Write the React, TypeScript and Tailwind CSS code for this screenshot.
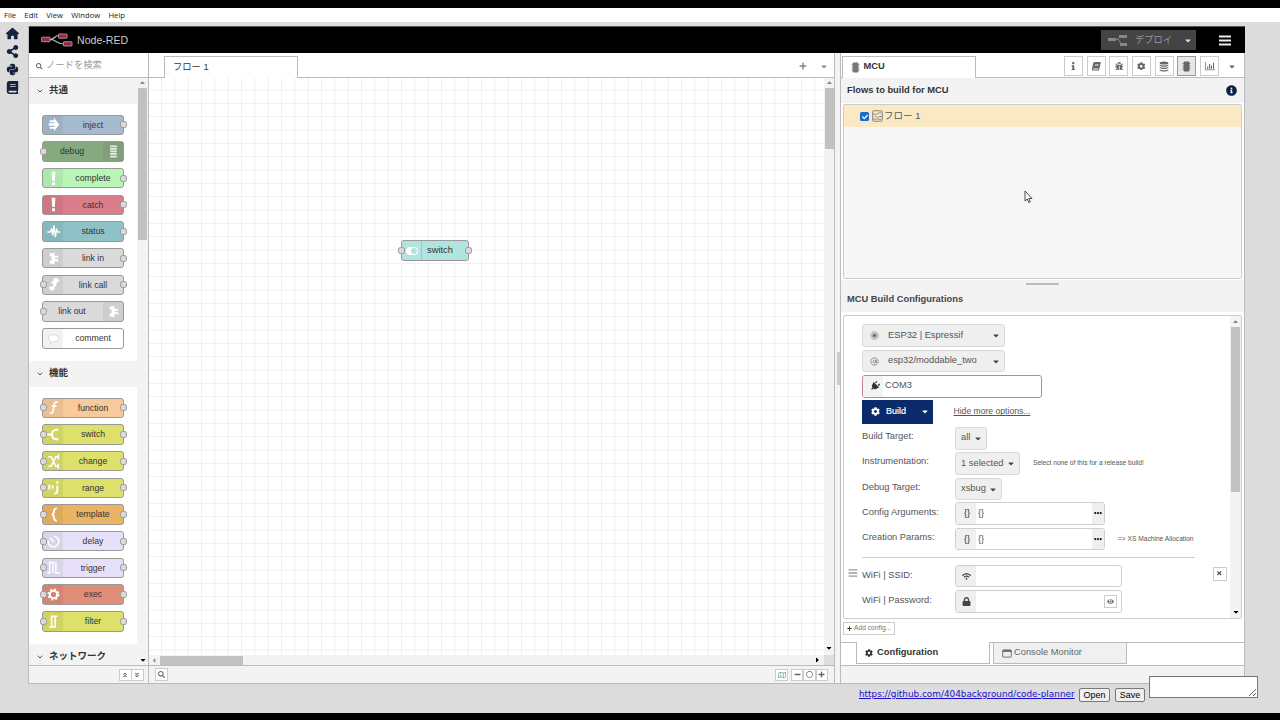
import { type ReactNode } from 'react';
import {
  FaAngleDoubleDown,
  FaAngleDoubleUp,
  FaBars,
  FaBook,
  FaBug,
  FaCaretDown,
  FaCheck,
  FaCog,
  FaEllipsisH,
  FaEye,
  FaInfo,
  FaInfoCircle,
  FaLock,
  FaMinus,
  FaPlug,
  FaPlus,
  FaPython,
  FaRegCircle,
  FaRegMap,
  FaSearch,
  FaShareAlt,
  FaTimes,
  FaWifi,
} from 'react-icons/fa';
import { FaHouse } from 'react-icons/fa6';
import { AtSign, ChevronDown } from 'lucide-react';

type PaletteNode = {
  label: string;
  color: string;
  icon: ReactNode;
  input?: boolean;
  output?: boolean;
  right?: boolean;
};

const linkIcon = (
  <path d="M6 4.500h3.500l1.500-1V7h4v2.200h-3.500v1.600H15V13h-4v3.500l-1.500-1H6V12h2V8H6z" fill="#fff" />
);

const exclamation = <path d="M8 3h4l-.7 9.500H8.700zM8.500 14h3v3h-3z" fill="#fff" />;

const COMMON: PaletteNode[] = [
  {
    label: 'inject',
    color: 'bg-[#a6bbcf]',
    output: true,
    icon: <path d="M6 5.500h4.500V3l5.500 7-5.500 7v-2.500H6v-2h5v-1.300H5V8.800h6V7.500H6z" fill="#fff" />,
  },
  {
    label: 'debug',
    color: 'bg-[#87a980]',
    input: true,
    right: true,
    icon: <path d="M6.500 4.500h7M6.500 7.200h7M6.500 9.900h7M6.500 12.600h7M6.500 15.300h7" stroke="#fff" strokeWidth="1.800" opacity=".8" />,
  },
  { label: 'complete', color: 'bg-[#b9f5b6]', output: true, icon: exclamation },
  { label: 'catch', color: 'bg-[#db7d8b]', output: true, icon: exclamation },
  {
    label: 'status',
    color: 'bg-[#8ec2c7]',
    output: true,
    icon: <path d="M3.500 10.500h3L8 7.500l1.200 6.500L10.500 3.500 12 16l1.200-8 1.300 2.500H17" fill="none" stroke="#fff" strokeWidth="1.400" />,
  },
  { label: 'link in', color: 'bg-[#dadada]', output: true, icon: linkIcon },
  {
    label: 'link call',
    color: 'bg-[#dadada]',
    input: true,
    output: true,
    icon: <path d="M10 3.500h4l2.500 2.500-2.500 2-1 1v2l-2 2v2.500l-3.500 1L5 14l1-2h2.500l2-2L8 9V6.500h2z" fill="#fff" />,
  },
  { label: 'link out', color: 'bg-[#dadada]', input: true, right: true, icon: linkIcon },
  {
    label: 'comment',
    color: 'bg-white',
    icon: <path d="M10 6c3 0 5.500 1.500 5.500 3.700s-2.500 3.800-5.500 3.800l-3.500 2 .5-2.500C5.300 12.200 4.500 11 4.500 9.700 4.500 7.500 7 6 10 6z" fill="#fff" stroke="#ccc" strokeWidth=".8" />,
  },
];

const FUNCTIONS: PaletteNode[] = [
  {
    label: 'function',
    color: 'bg-[#f8c99b]',
    icon: <path d="M14.500 4.500c-2-1-3.500 0-3.700 2L9.700 13c-.3 2.500-1.500 3.500-3.700 2.500M8 8.500h5" fill="none" stroke="#fff" strokeWidth="1.800" />,
  },
  {
    label: 'switch',
    color: 'bg-[#dde06b]',
    icon: <path d="M3.500 10h5c0-3 1.500-5 4.500-5h2M8.500 10c0 3 1.500 5 4.500 5h2" fill="none" stroke="#fff" strokeWidth="2.100" />,
  },
  {
    label: 'change',
    color: 'bg-[#dde06b]',
    icon: <path d="M4.500 5h3l5 10H15M4.500 15h3l5-10H15M15 2.500v5M15 12.500v5" fill="none" stroke="#fff" strokeWidth="1.700" />,
  },
  {
    label: 'range',
    color: 'bg-[#dde06b]',
    icon: <path d="M5.500 7v5M9 8v3M14 3.500v2.500M14 8v6c0 1.700-.8 2.300-3 2.300" fill="none" stroke="#fff" strokeWidth="2" />,
  },
  {
    label: 'template',
    color: 'bg-[#eab464]',
    icon: <path d="M13.500 3.500c-2.500 0-3 .8-3 3 0 2 0 3-2.200 3.500 2.200.5 2.200 1.500 2.200 3.500 0 2.200.5 3 3 3" fill="none" stroke="#fff" strokeWidth="2" />,
  },
  {
    label: 'delay',
    color: 'bg-[#e6e0f8]',
    icon: <path d="M10 4.500A5.600 5.600 0 1 1 4.500 9M10.500 10.500L6.500 6" fill="none" stroke="#fff" strokeWidth="1.600" />,
  },
  {
    label: 'trigger',
    color: 'bg-[#e6e0f8]',
    icon: <path d="M3.500 15.800H6V4.500h3.500v11.300M12.500 4v11.800H17" fill="none" stroke="#fff" strokeWidth="1.600" />,
  },
  {
    label: 'exec',
    color: 'bg-[#e08d79]',
    icon: (
      <g fill="none" stroke="#fff">
        <circle cx="10" cy="10" r="3.900" strokeWidth="2.200" />
        <circle cx="10" cy="10" r="5.500" strokeWidth="1.600" strokeDasharray="2.160 2.160" />
      </g>
    ),
  },
  {
    label: 'filter',
    color: 'bg-[#dde06b]',
    icon: <path d="M5.500 15.800H8V4.500h6M8 15.800h3.700V4.500" fill="none" stroke="#fff" strokeWidth="1.700" />,
  },
].map((n) => ({ ...n, input: true, output: true }));

function ChipIcon({ className = '' }: { className?: string }) {
  return (
    <svg viewBox="0 0 10 12" className={`h-[11px] w-[9px] ${className}`} fill="currentColor">
      <rect x="1.800" y=".5" width="6.400" height="11" rx="1" />
      <path d="M.5 2.200h9v1h-9zM.5 4.300h9v1h-9zM.5 6.400h9v1h-9zM.5 8.500h9v1h-9z" opacity=".65" />
    </svg>
  );
}

function DatabaseIcon() {
  return (
    <svg viewBox="0 0 12 13" className="h-[11px] w-[10px]" fill="currentColor">
      <ellipse cx="6" cy="2.300" rx="5.200" ry="1.800" />
      <path d="M.8 4c2 1.600 8.400 1.600 10.400 0v1.200c-1.600 2-8.800 2-10.400 0zM.8 6.900c2 1.600 8.400 1.600 10.400 0v1.200c-1.600 2-8.800 2-10.400 0zM.8 9.800c2 1.600 8.400 1.600 10.400 0V11c-1.600 2-8.800 2-10.400 0z" />
    </svg>
  );
}

function ChartIcon() {
  return (
    <svg viewBox="0 0 13 12" className="h-[10px] w-[12px]" fill="none" stroke="currentColor">
      <path d="M1 1v9.500h11.500" strokeWidth=".9" />
      <path d="M3.700 9.300V6.500M6 9.300V3.500M8.300 9.300V5.500M10.700 9.300V2" strokeWidth="1.300" />
    </svg>
  );
}

function WindowIcon() {
  return (
    <svg viewBox="0 0 10 9" className="mr-[2px] h-[9px] w-[10px]" fill="none" stroke="#666">
      <rect x=".7" y=".9" width="8.600" height="7.200" rx=".6" strokeWidth=".9" />
      <path d="M.7 2h8.600" strokeWidth="1.800" />
    </svg>
  );
}

const TOOLBAR: ReactNode[] = [
  <FaInfo />,
  <FaBook className="-skew-x-12" />,
  <FaBug />,
  <FaCog />,
  <DatabaseIcon />,
  <ChipIcon />,
  <ChartIcon />,
];

function Port({ className }: { className: string }) {
  return (
    <span
      className={`absolute top-[5.800px] h-[7px] w-[7px] rounded-[2.500px] border border-[#999] bg-[#d9d9d9] ${className}`}
    />
  );
}

function NodeItem({ node }: { node: PaletteNode }) {
  return (
    <div
      className={`relative flex h-[20.500px] w-[82px] shrink-0 rounded-[3px] border border-[#999] ${node.color} ${
        node.right ? 'flex-row-reverse' : ''
      }`}
    >
      <span className="flex w-5 shrink-0 items-center justify-center bg-black/5">
        <svg viewBox="0 0 20 20" className="h-[19px] w-[19px]">
          {node.icon}
        </svg>
      </span>
      <span
        className={`flex-1 text-center text-[8.700px] leading-[18px] text-[#333] ${node.right ? 'pr-[2px]' : ''}`}
      >
        {node.label}
      </span>
      {node.input && <Port className="-left-[3.500px]" />}
      {node.output && <Port className="-right-[4px]" />}
    </div>
  );
}

function Category({ name, nodes, className }: { name: string; nodes: PaletteNode[]; className: string }) {
  return (
    <div className={`shrink-0 ${className}`}>
      <div className="flex h-[26px] items-center bg-[#f3f3f3] pb-px pl-[7px] text-[9.500px] font-bold text-[#333]">
        <ChevronDown className="mr-[5px] h-[8px] w-[8px]" strokeWidth={2.5} />
        {name}
      </div>
      <div className="flex flex-col gap-[6.190px] pt-[10.500px] pl-[13px]">
        {nodes.map((n) => (
          <NodeItem key={n.label} node={n} />
        ))}
      </div>
    </div>
  );
}

function Palette() {
  return (
    <aside className="flex w-[120px] flex-col border-r border-[#bbb] bg-white">
      <div className="flex h-[25px] items-center border-b border-[#bbb] pt-[2px] pl-[7px] text-[9.300px] text-[#999]">
        <FaSearch className="mr-[3.500px] h-[6.500px] w-[6.500px] text-[#666]" />
        ノードを検索
      </div>
      <div className="flex h-[587px] overflow-hidden">
        <div className="flex w-[108px] flex-col">
          <Category name="共通" nodes={COMMON} className="h-[283px]" />
          <Category name="機能" nodes={FUNCTIONS} className="h-[283px]" />
          <Category name="ネットワーク" nodes={[]} className="h-[26px]" />
        </div>
        <div className="flex flex-1 flex-col items-center bg-[#f3f3f3]">
          <FaCaretDown className="my-px h-[8px] w-[7px] shrink-0 rotate-180 text-[#888]" />
          <div className="h-[152px] w-[9px] bg-[#c1c1c1]" />
          <FaCaretDown className="mt-auto mb-px h-[8px] w-[8px] shrink-0" />
        </div>
      </div>
      <div className="flex flex-1 items-center justify-end border-t border-[#bbb] bg-[#f3f3f3] pr-[4px] text-[6px] text-[#666]">
        <span className="flex h-[12px] w-[12.500px] items-center justify-center border border-[#ccc] bg-white">
          <FaAngleDoubleUp />
        </span>
        <span className="flex h-[12px] w-[12.500px] items-center justify-center border border-l-0 border-[#ccc] bg-white">
          <FaAngleDoubleDown />
        </span>
      </div>
    </aside>
  );
}

function Workspace() {
  return (
    <main className="flex w-[686px] flex-col border-r border-[#bbb]">
      <div className="flex h-[25px] items-end border-b border-[#bbb] bg-white">
        <div className="-mb-px ml-[15px] h-[22px] w-[134px] border border-b-0 border-[#bbb] bg-white pl-[8px] text-[9.300px] leading-[20px] text-[#333]">
          フロー 1
        </div>
        <FaPlus className="mb-[7px] ml-auto h-[8px] w-[8px] text-[#888]" />
        <FaCaretDown className="mr-[5px] mb-[6px] ml-[12px] h-[9px] w-[10px] text-[#888]" />
      </div>
      <div className="flex h-[577px]">
        <div className="relative w-[675px] bg-white">
          <svg className="block h-full w-full">
            <defs>
              <pattern id="grid" x="-1.200" y="-1.800" width="13.333" height="13.333" patternUnits="userSpaceOnUse">
                <path d="M.5 0v13.333M0 .5h13.333" stroke="#eee" fill="none" />
              </pattern>
            </defs>
            <rect width="100%" height="100%" fill="url(#grid)" />
          </svg>
          <div className="absolute top-[162px] left-[252px] flex h-[21px] w-[68px] rounded-[3px] border border-[#999] bg-[#b0e4df]">
            <span className="flex w-[20px] items-center justify-center border-r border-[#9bcac6]">
              <span className="flex h-[8px] w-[12px] items-center justify-end rounded-full bg-white pr-px">
                <span className="h-[6px] w-[6px] rounded-full bg-[#b0e4df]" />
              </span>
            </span>
            <span className="pl-[5px] text-[9.330px] leading-[19px] text-[#333]">switch</span>
            <Port className="-left-[4px]" />
            <Port className="-right-[4px]" />
          </div>
        </div>
        <div className="flex flex-1 flex-col items-center bg-[#f3f3f3]">
          <FaCaretDown className="my-px h-[8px] w-[7px] shrink-0 rotate-180 text-[#888]" />
          <div className="h-[61px] w-[9px] bg-[#c1c1c1]" />
          <FaCaretDown className="mt-auto mb-[3px] h-[8px] w-[8px] shrink-0" />
        </div>
      </div>
      <div className="flex h-[10px] items-center bg-[#f3f3f3]">
        <FaCaretDown className="mr-[2px] ml-[2px] h-[7px] w-[7px] rotate-90 text-[#888]" />
        <div className="h-[9px] w-[83px] bg-[#c1c1c1]" />
        <FaCaretDown className="mr-[3px] ml-auto h-[8px] w-[8px] -rotate-90" />
        <div className="h-full w-[10px] bg-[#ddd]" />
      </div>
      <div className="flex flex-1 items-center border-t border-[#bbb] bg-[#f3f3f3] pr-[6px] pl-[6px] text-[7px] text-[#666]">
        <span className="flex h-[12.500px] w-[13px] items-center justify-center border border-[#ccc] bg-white">
          <FaSearch />
        </span>
        <span className="mr-[3px] ml-auto flex h-[12px] w-[13px] items-center justify-center border border-[#ccc] bg-white text-[8px] text-[#7a9a8c]">
          <FaRegMap />
        </span>
        {[<FaMinus />, <FaRegCircle />, <FaPlus />].map((icon, i) => (
          <span key={i} className="flex h-[12px] w-[12.300px] items-center justify-center border border-[#ccc] bg-white">
            {icon}
          </span>
        ))}
      </div>
    </main>
  );
}

function Select({ children, className = '' }: { children: ReactNode; className?: string }) {
  return (
    <div
      className={`flex h-[22.500px] items-center rounded-[3px] border border-[#d9d9d9] bg-[#efefef] pr-[3px] pl-[5px] text-[#555] ${className}`}
    >
      {children}
      <FaCaretDown className="ml-auto h-[9px] w-[10px] text-[#444]" />
    </div>
  );
}

function Row({ label, children }: { label: string; children: ReactNode }) {
  return (
    <div className="flex h-[25.400px] items-center">
      <span className="w-[93px] shrink-0 pb-px">{label}</span>
      {children}
    </div>
  );
}

function TypedInput() {
  return (
    <div className="flex h-[22.500px] w-[150px] items-stretch overflow-hidden rounded-[3px] border border-[#d0d0d0] leading-[21px]">
      <span className="w-[20px] bg-[#f0f0f0] pl-[8px] text-[#333]">{'{}'}</span>
      <span className="flex-1 pl-[2px]">{'{}'}</span>
      <span className="flex w-[12px] items-center justify-center bg-[#efefef]">
        <FaEllipsisH className="h-[8px] w-[8px] text-[#222]" />
      </span>
    </div>
  );
}

function IconInput({ icon, children }: { icon: ReactNode; children?: ReactNode }) {
  return (
    <div className="flex h-[22.500px] w-[167px] items-center overflow-hidden rounded-[3px] border border-[#d0d0d0]">
      <span className="flex h-full w-[20px] items-center justify-center bg-[#efefef] text-[9px] text-[#444]">{icon}</span>
      {children}
    </div>
  );
}

function BuildConfig() {
  return (
    <div className="mx-[2px] mt-[3px] flex h-[304px] shrink-0 overflow-hidden rounded-[2px] border border-[#ccc] bg-white text-[9.330px] text-[#555]">
      <div className="w-[386px] pt-[7px] pl-[18px]">
        <div className="flex h-[25.400px] items-center">
          <Select className="w-[143px]">
            <svg viewBox="0 0 10 10" className="mr-[9px] ml-[2px] h-[9px] w-[9px]" fill="#888">
              <circle cx="5" cy="5" r="4.300" fill="none" stroke="#888" strokeWidth=".9" strokeDasharray="1.500 .6" />
              <circle cx="5" cy="5" r="3.300" opacity=".6" />
              <circle cx="5" cy="5" r="1.500" fill="#555" />
            </svg>
            ESP32 | Espressif
          </Select>
        </div>
        <div className="flex h-[25.400px] items-center">
          <Select className="w-[143px]">
            <AtSign className="mr-[9px] ml-[2px] h-[9px] w-[9px] text-[#777]" />
            esp32/moddable_two
          </Select>
        </div>
        <div className="flex h-[25.400px] items-center">
          <div className="flex h-[23px] w-[180px] items-center overflow-hidden rounded-[3px] border border-[#c48097]">
            <span className="mr-[2px] flex h-full w-[20px] items-center justify-center bg-[#f3f3f3]">
              <FaPlug className="ml-[3px] h-[10px] w-[10px] rotate-45 text-[#333]" />
            </span>
            COM3
          </div>
        </div>
        <div className="flex h-[25.400px] items-center">
          <div className="flex h-[24px] w-[71px] items-center bg-[#0b2a6b] pr-[3px] pl-[9px] text-[9px] text-white [-webkit-text-stroke:0.200px_white]">
            <FaCog className="mr-[6px] h-[9px] w-[9px]" />
            Build
            <FaCaretDown className="ml-auto h-[9px] w-[10px]" />
          </div>
          <span className="ml-[20.500px] text-[8.600px] underline">Hide more options...</span>
        </div>
        <Row label="Build Target:">
          <Select className="mt-[2px] w-[32px]">all</Select>
        </Row>
        <Row label="Instrumentation:">
          <Select className="mt-[2px] w-[65px]">1 selected</Select>
          <span className="ml-[13px] text-[6.640px]">Select none of this for a release build!</span>
        </Row>
        <Row label="Debug Target:">
          <Select className="mt-[2px] w-[47px]">xsbug</Select>
        </Row>
        <Row label="Config Arguments:">
          <TypedInput />
        </Row>
        <Row label="Creation Params:">
          <TypedInput />
          <span className="ml-[13px] text-[6.640px]">=&gt; XS Machine Allocation</span>
        </Row>
        <div className="mt-[5px] mb-[6px] h-px w-[333px] bg-[#ccc]" />
        <div className="flex">
          <FaBars className="mt-[4px] mr-[4px] -ml-[14px] h-[10px] w-[10px] text-[#999]" />
          <div>
            <Row label="WiFi | SSID:">
              <IconInput icon={<FaWifi />} />
              <span className="-mt-[5px] ml-[90.500px] flex h-[14px] w-[14px] items-center justify-center border border-[#ccc] text-[#444]">
                <FaTimes className="h-[6.500px] w-[6.500px]" />
              </span>
            </Row>
            <Row label="WiFi | Password:">
              <IconInput icon={<FaLock />}>
                <span className="mr-[4px] ml-auto flex h-[13px] w-[13px] items-center justify-center border border-[#ccc] text-[7px] text-[#777]">
                  <FaEye />
                </span>
              </IconInput>
            </Row>
          </div>
        </div>
      </div>
      <div className="flex flex-1 flex-col items-center bg-[#f3f3f3]">
        <FaCaretDown className="mt-[2px] mb-px h-[8px] w-[7px] shrink-0 rotate-180 text-[#888]" />
        <div className="h-[165px] w-[9px] bg-[#c1c1c1]" />
        <FaCaretDown className="mt-auto mb-[2px] h-[8px] w-[8px] shrink-0 text-black" />
      </div>
    </div>
  );
}

function Sidebar() {
  return (
    <aside className="flex w-[405px] flex-col border-x border-[#bbb] bg-white">
      <div className="flex h-[25px] shrink-0 items-end border-b border-[#bbb]">
        <div className="-mb-px ml-px flex h-[22px] w-[134px] items-center border border-b-0 border-[#bbb] bg-white pb-px pl-[8px] text-[9.330px] font-bold text-[#333]">
          <ChipIcon className="mr-[3.500px] text-[#777]" />
          MCU
        </div>
        <div className="mb-px ml-auto flex gap-[3.700px]">
          {TOOLBAR.map((icon, i) => (
            <span
              key={i}
              className={`flex h-[20px] w-[19px] items-center justify-center border text-[8.500px] text-[#666] ${
                i === 5 ? 'border-[#999] bg-[#e8e8e8]' : 'border-[#ccc]'
              }`}
            >
              {icon}
            </span>
          ))}
        </div>
        <FaCaretDown className="mr-[7px] mb-[6px] ml-[8px] h-[9px] w-[10px] text-[#666]" />
      </div>
      <div className="flex h-[25px] shrink-0 items-center bg-[#f3f3f3] pr-[7px] pl-[6px] text-[9.330px] font-bold text-[#333]">
        Flows to build for MCU
        <FaInfoCircle className="mb-px ml-auto h-[11px] w-[11px] text-[#0b2050]" />
      </div>
      <div className="mx-[2px] mt-[1px] h-[175px] shrink-0 rounded-[2px] border border-[#ccc] bg-[#f7f7f7]">
        <div className="flex h-[22px] items-center bg-[#fbe9c6] pl-[16px] text-[9.500px] text-[#555]">
          <span className="mt-px flex h-[9px] w-[9px] items-center justify-center rounded-[1.500px] bg-[#1a6dc8] text-[6px] text-white">
            <FaCheck />
          </span>
          <svg viewBox="0 0 12 13" className="mr-[1px] ml-[3px] h-[12px] w-[11px]" fill="none" stroke="#777">
            <rect x=".8" y=".8" width="10.400" height="11.400" rx="1" />
            <path d="M1 4.500h4c2 0 1-1.500 3-1.500h2M1 10h3c3 0 2-3 4-3h3M6 10h4M3 7h2" strokeWidth=".9" />
          </svg>
          フロー 1
        </div>
      </div>
      <div className="flex h-[6px] shrink-0 items-end justify-center border-t border-white bg-[#f3f3f3]">
        <div className="h-[2px] w-[33px] bg-[#bbb]" />
      </div>
      <div className="flex h-[27px] shrink-0 items-center bg-[#f3f3f3] pl-[6px] text-[9.330px] font-bold text-[#444]">
        <span className="pt-[2px]">MCU Build Configurations</span>
      </div>
      <BuildConfig />
      <div className="mt-[2.500px] ml-[2px] flex h-[13.500px] w-[52px] shrink-0 items-center border border-[#ccc] pl-[3px] text-[6.700px] text-[#777]">
        <FaPlus className="mr-[2px] h-[5px] w-[5px] text-[#333]" />
        Add config...
      </div>
      <div className="mt-[7px] flex h-[23px] shrink-0 items-start border-t border-[#bbb] text-[9.330px]">
        <div className="-mt-px ml-[15px] flex h-[22px] w-[134px] items-center border border-t-0 border-[#bbb] bg-white pl-[8px] font-bold text-[#333]">
          <FaCog className="mr-[4px] h-[8px] w-[8px]" />
          Configuration
        </div>
        <div className="-mt-px ml-[3px] flex h-[22px] w-[134px] items-center border border-[#bbb] bg-[#f0f0f0] pl-[8px] text-[#666]">
          <WindowIcon />
          Console Monitor
        </div>
      </div>
      <div className="flex-1 border-t border-[#bbb] bg-[#f3f3f3]" />
    </aside>
  );
}

export default function App() {
  return (
    <div className="relative flex h-[720px] w-[1280px] flex-col overflow-hidden border-t-8 border-b-[7px] border-black bg-[#dcdcdc] font-['Liberation_Sans','Noto_Sans_CJK_JP',sans-serif]">
      <nav className="flex h-[14px] shrink-0 items-center gap-[8.200px] bg-white pt-px pl-[4px] font-['Open_Sans','Noto_Sans',sans-serif] text-[7.700px] text-[#222]">
        {['File', 'Edit', 'View', 'Window', 'Help'].map((item) => (
          <span key={item}>{item}</span>
        ))}
      </nav>
      <div className="flex h-[662px] shrink-0">
        <div className="flex w-[28px] flex-col items-center gap-[5px] pt-[5px] pr-[4px] text-[13px] text-[#16233f]">
          <FaHouse />
          <FaShareAlt />
          <FaPython />
          <FaBook />
        </div>
        <div className="mt-[4px] flex w-[1217px] flex-col border-b border-l border-[#bbb]">
          <header className="flex h-[27px] shrink-0 items-center border-t border-[#555] bg-black pr-[14px] pl-[12px] text-[#ccc]">
            <svg viewBox="0 0 32 14" className="mr-[4px] h-[14px] w-[32px]">
              <path d="M9 6.500c5 0 4-4 9-4M9 6.500c7 0 6 4.500 14 4.500" fill="none" stroke="#bbb" strokeWidth="1.200" />
              <g fill="#8f2b46" stroke="#c9a5af" strokeWidth=".8">
                <rect x=".6" y="4.200" width="8.500" height="4.500" rx=".5" />
                <rect x="17.500" y="1" width="8.500" height="4.200" rx=".5" />
                <rect x="22.500" y="8.700" width="8.500" height="4.300" rx=".5" />
              </g>
            </svg>
            <span className="pt-[2px] text-[10.600px]">Node-RED</span>
            <div className="ml-auto flex h-[20px] w-[95px] items-center bg-[#444] pr-[3px] pl-[7px] text-[9.300px] text-[#999]">
              <svg viewBox="0 0 20 13" className="mr-[7px] h-[13px] w-[20px]" fill="#888">
                <path d="M8 5.500c3 0 2-2.500 5-2.500M9 5.500c4 0 2 4.500 5 4.500" fill="none" stroke="#888" />
                <rect x="0" y="4" width="8" height="3" />
                <rect x="11" y="1" width="8" height="3" />
                <rect x="12" y="9" width="7" height="3" />
              </svg>
              <span className="pt-px">デプロイ</span>
              <FaCaretDown className="ml-auto h-[9px] w-[10px] text-[#ddd]" />
            </div>
            <svg viewBox="0 0 12 11" className="ml-[23px] h-[11px] w-[12px]">
              <path d="M0 1.500h12M0 5.500h12M0 9.500h12" stroke="#eee" strokeWidth="1.800" />
            </svg>
          </header>
          <div className="flex flex-1">
            <Palette />
            <Workspace />
            <div className="flex w-[5px] items-center bg-[#f3f3f3]">
              <div className="ml-[2px] h-[33px] w-[2.500px] bg-[#ccc]" />
            </div>
            <Sidebar />
          </div>
        </div>
      </div>
      <footer className="flex flex-1 items-start pl-[859px] text-[9px]">
        <a className="mt-[3px] w-[216px] font-['DejaVu_Sans',sans-serif] text-[8.870px] leading-[14px] whitespace-nowrap text-[#1a0dcc] underline">
          https://github.com/404background/code-planner
        </a>
        <button className="mt-[4px] ml-[4px] h-[14px] w-[31px] rounded-[2px] border border-[#777] bg-[#efefef] leading-[12px]">
          Open
        </button>
        <button className="mt-[4px] ml-[5px] h-[14px] w-[30px] rounded-[2px] border border-[#777] bg-[#efefef] leading-[12px]">
          Save
        </button>
        <textarea className="relative -mt-[8px] ml-[4px] h-[22px] w-[109px] resize border border-[#777] bg-white" />
      </footer>
      {/* Mouse pointer */}
      <svg viewBox="0 0 9 14" className="absolute top-[182px] left-[1024px] h-[14px] w-[9px]">
        <path d="M1 1v10l2.300-2 1.500 3.500 1.500-.7L4.800 8.500H8z" fill="#fff" stroke="#333" strokeWidth=".9" />
      </svg>
    </div>
  );
}
